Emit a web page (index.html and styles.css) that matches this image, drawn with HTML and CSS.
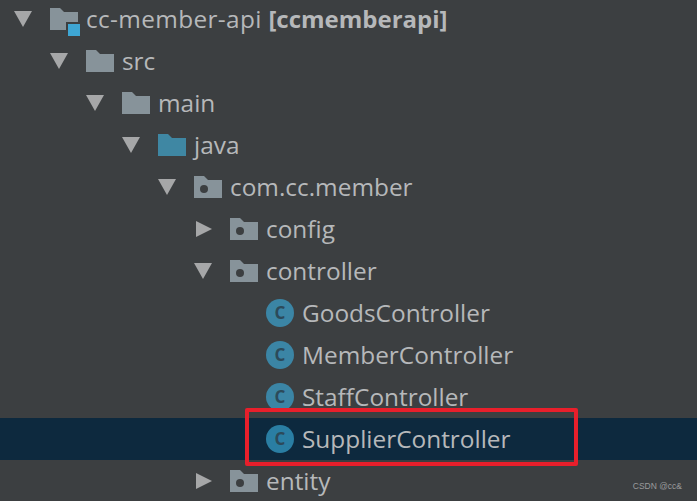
FILE: index.html
```html
<!DOCTYPE html>
<html lang="en">

<head>
    <meta charset="UTF-8">
    <title>Project tree</title>
    <link rel="stylesheet" href="styles.css">
</head>

<body>
    <svg class="defs" width="0" height="0">
        <symbol id="folder" viewBox="0 0 28 22">
            <path d="M0 0H10L14 4H28V22H0Z" fill="currentColor" />
        </symbol>
        <symbol id="pkg" viewBox="0 0 28 22">
            <path d="M0 0H10L14 4H28V22H0Z" fill="currentColor" />
            <circle cx="10" cy="13" r="4" fill="#3c3f41" />
        </symbol>
    </svg>

    <ul class="tree">
        <li class="row lv0">
            <span class="arrow down"></span>
            <span class="icon root">
                <svg class="folder grey"><use href="#folder" /></svg>
                <span class="badge"></span>
            </span>
            <span class="name rootname">cc-member-api <b>[ccmemberapi]</b></span>
        </li>
        <li class="row lv1">
            <span class="arrow down"></span>
            <svg class="folder grey"><use href="#folder" /></svg>
            <span class="name">src</span>
        </li>
        <li class="row lv2">
            <span class="arrow down"></span>
            <svg class="folder grey"><use href="#folder" /></svg>
            <span class="name">main</span>
        </li>
        <li class="row lv3">
            <span class="arrow down"></span>
            <svg class="folder blue"><use href="#folder" /></svg>
            <span class="name">java</span>
        </li>
        <li class="row lv4">
            <span class="arrow down"></span>
            <svg class="folder grey"><use href="#pkg" /></svg>
            <span class="name">com.cc.member</span>
        </li>
        <li class="row lv5">
            <span class="arrow right"></span>
            <svg class="folder grey"><use href="#pkg" /></svg>
            <span class="name">config</span>
        </li>
        <li class="row lv5">
            <span class="arrow down"></span>
            <svg class="folder grey"><use href="#pkg" /></svg>
            <span class="name">controller</span>
        </li>
        <li class="row lv6">
            <span class="cls">C</span>
            <span class="name">GoodsController</span>
        </li>
        <li class="row lv6">
            <span class="cls">C</span>
            <span class="name">MemberController</span>
        </li>
        <li class="row lv6">
            <span class="cls">C</span>
            <span class="name">StaffController</span>
        </li>
        <li class="row lv6 selected">
            <span class="cls">C</span>
            <span class="name">SupplierController</span>
        </li>
        <li class="row lv5">
            <span class="arrow right"></span>
            <svg class="folder grey"><use href="#pkg" /></svg>
            <span class="name">entity</span>
        </li>
    </ul>

    <div class="redbox"></div>
    <div class="mark">CSDN @cc&amp;</div>
</body>

</html>
```

FILE: styles.css
```css
* {
    margin: 0;
    padding: 0;
}

html,
body {
    height: 100%;
    overflow: hidden;
}

body {
    position: relative;
    background: #3c3f41;
    color: #b6b8ba;
    font-family: "Open Sans", "Noto Sans", sans-serif;
    font-size: 24.4px;
}

ul,
li {
    list-style: none;
}

.defs {
    position: absolute;
}

.tree {
    margin-top: -2px;
}

.row {
    display: flex;
    align-items: center;
    height: 42px;
    white-space: nowrap;
}

.lv0 { padding-left: 14px; }
.lv1 { padding-left: 50px; }
.lv2 { padding-left: 86px; }
.lv3 { padding-left: 122px; }
.lv4 { padding-left: 158px; }
.lv5 { padding-left: 194px; }
.lv6 { padding-left: 266px; }

.selected {
    background: #0d293e;
}

.selected .cls {
    background: #2a7ea3;
}

.arrow {
    flex: none;
    width: 0;
    height: 0;
    margin-right: 18px;
}

.arrow.down {
    border-left: 9px solid transparent;
    border-right: 9px solid transparent;
    border-top: 16px solid #a6a7a8;
}

.arrow.right {
    margin-left: 2px;
    margin-right: 18px;
    border-top: 8px solid transparent;
    border-bottom: 8px solid transparent;
    border-left: 16px solid #a6a7a8;
}

.folder {
    flex: none;
    display: block;
    width: 28px;
    height: 22px;
}

.grey {
    color: #87939a;
}

.blue {
    color: #3f87a3;
}

.icon {
    flex: none;
}

.root {
    position: relative;
    width: 28px;
    height: 22px;
}

.badge {
    position: absolute;
    left: 18px;
    top: 16px;
    width: 12px;
    height: 12px;
    background: #3ea6d4;
    box-shadow: -2px -2px 0 #3c3f41;
}

.name {
    margin-left: 8px;
    margin-bottom: 2px;
}

.rootname {
    letter-spacing: 0.35px;
}

.name b {
    font-size: 24px;
    font-weight: 700;
    letter-spacing: 0;
}

.cls {
    flex: none;
    width: 28px;
    height: 28px;
    border-radius: 50%;
    background: #3b85a5;
    color: #2c4a5a;
    font-family: "Open Sans", sans-serif;
    font-size: 17px;
    font-weight: 700;
    line-height: 28px;
    text-align: center;
}

.redbox {
    position: absolute;
    left: 245px;
    top: 408px;
    width: 325px;
    height: 50px;
    border: 4px solid #e81f2b;
    border-radius: 2px;
}

.mark {
    position: absolute;
    right: 15px;
    top: 481px;
    color: #9a9b9c;
    font-family: "Liberation Sans", sans-serif;
    font-size: 8.5px;
}
```
